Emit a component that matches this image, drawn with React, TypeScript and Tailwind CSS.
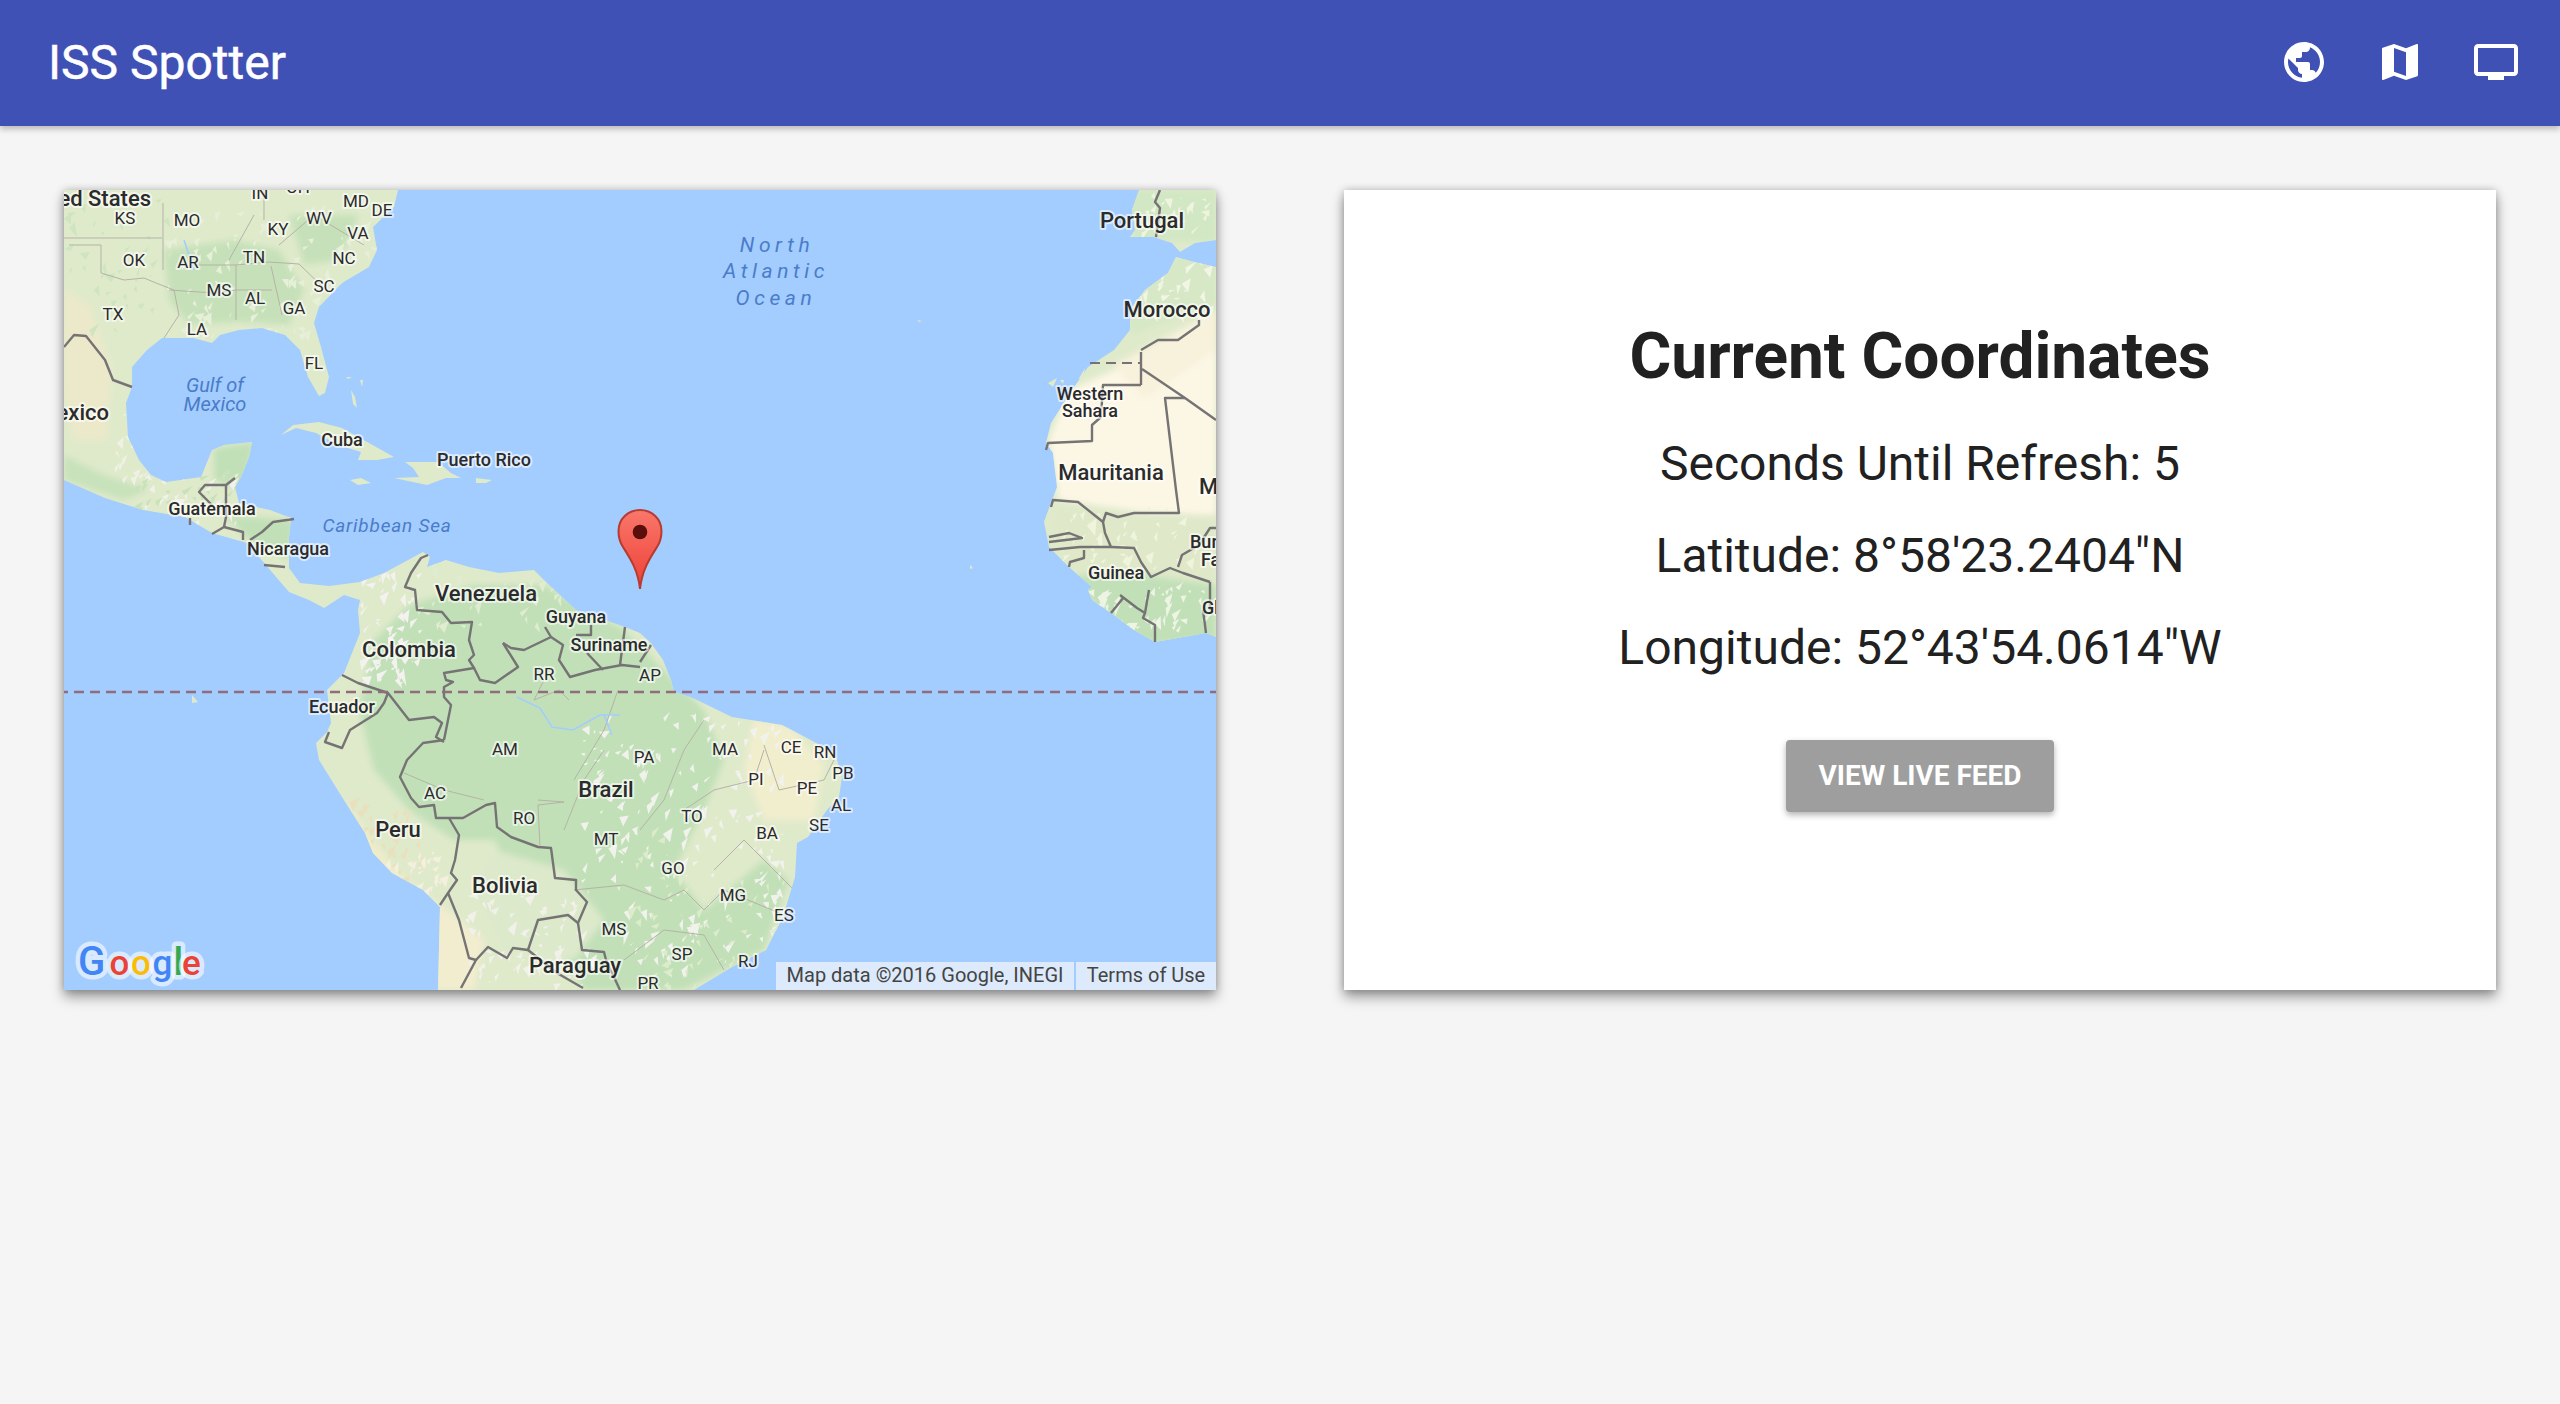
const land = [
  // north and central america
  "0,0 334,0 330,17 309,37 313,60 305,77 278,93 255,117 250,133 257,157 265,187 261,203 255,206 244,187 236,160 221,145 198,138 175,140 156,145 148,153 129,148 98,148 83,160 68,177 68,197 62,213 64,247 75,270 87,285 102,292 137,287 148,260 160,255 188,252 185,267 177,287 171,297 175,313 206,320 227,328 225,347 225,378 236,393 265,396 296,392 296,410 280,405 260,418 245,410 225,402 183,353 148,343 121,327 79,320 41,308 0,290",
  // cuba, hispaniola, jamaica, puerto rico
  "217,245 229,235 255,232 278,238 305,253 330,267 313,270 294,270 297,262 274,255 252,243 232,238",
  "341,272 374,272 387,283 397,288 382,288 363,295 330,288 355,287 349,278",
  "286,290 297,288 307,293 294,295",
  "412,288 428,290 422,293 412,293",
  "282,187 288,187 284,189",
  "296,190 299,190 298,197",
  "287,200 291,207 293,218 289,214",
  // south america
  "296,410 296,392 320,383 359,362 366,367 363,377 382,370 405,377 435,383 470,380 483,393 512,420 561,437 576,443 587,453 599,470 607,490 610,502 626,507 633,510 668,527 687,530 718,535 741,547 771,563 778,587 775,607 763,620 744,647 733,653 731,687 719,727 702,760 668,777 630,800 374,800 376,717 359,700 328,683 309,663 301,643 278,607 255,570 252,553 263,542 267,533 263,500 280,483 296,443 294,420",
  // iberia
  "1075,0 1068,20 1071,40 1066,47 1090,47 1108,53 1116,62 1131,53 1152,50 1152,0",
  // africa
  "1112,67 1130,72 1152,77 1152,447 1142,443 1091,452 1070,440 1047,423 1028,410 1024,400 1028,397 1005,377 985,357 980,332 987,313 993,297 989,263 982,253 987,233 1008,200 1024,177 1050,160 1066,140 1066,120 1081,100 1104,83",
  // canaries, azores and cape verde specks
  "984,193 993,188 989,197",
  "1015,188 1021,178 1018,192",
  "996,190 1000,190 999,194",
  "853,130 858,131 855,132",
  "906,375 909,378 906,379",
  "128,505 134,512 128,513",
];

// tone patches, clipped to land and blurred at the edges
const tones: [string, string][] = [
  ["#c6e1b9", "100,60 170,50 215,60 240,100 225,135 175,132 125,135 105,110"],
  ["#c6e1b9", "225,25 295,25 275,70 240,75"],
  ["#ece9ca", "0,100 25,115 48,180 42,250 10,250 0,200"],
  ["#c8e2bb", "0,265 40,285 85,300 60,310 0,290"],
  ["#c1e0b8", "150,258 190,252 180,300 150,290"],
  ["#c1e0b8", "160,325 230,330 225,370 185,350"],
  ["#c1e0b8", "345,415 410,395 480,395 560,440 600,480 640,520 660,570 640,620 610,680 640,720 700,670 725,690 700,760 620,800 520,800 470,720 430,650 390,650 345,620 310,580 295,520 310,450"],
  ["#dde9cb", "430,660 500,680 540,730 510,770 440,760 410,700"],
  ["#f2ecc8", "278,607 330,680 376,715 372,800 350,720 295,650"],
  ["#f1eecd", "690,530 725,535 760,575 750,630 700,630 680,580"],
  ["#f3edcf", "376,715 420,750 410,800 372,800"],
  ["#fcf7e5", "1005,200 1152,135 1152,330 1100,325 995,310 985,250"],
  ["#f8f2dc", "1050,175 1152,120 1152,160 1080,210"],
  ["#d6e8c6", "1060,80 1152,60 1152,115 1120,125 1066,145"],
  ["#d2e7c3", "1060,0 1152,0 1152,52 1070,50"],
  ["#dfe9ca", "980,318 1152,325 1152,400 1060,380 1010,385"],
  ["#c1e0b8", "1010,385 1080,385 1152,395 1152,450 1080,455 1030,415"],
];

// mottled light flecks, the small terrain shards of the map tiles
const flecks: [string, number, number, number, number, number][] = [
  ["#e6efd8", 100, 20, 230, 130, 110],
  ["#cfe5c0", 0, 10, 110, 130, 40],
  ["#f1f1ea", 80, 285, 190, 50, 46],
  ["#c9e2bb", 70, 280, 110, 40, 30],
  ["#eef1e4", 50, 200, 60, 90, 36],
  ["#f3f2ee", 295, 385, 60, 110, 70],
  ["#e0eccf", 350, 370, 150, 70, 40],
  ["#f1f2ec", 515, 525, 200, 260, 200],
  ["#dcebc9", 560, 640, 160, 160, 60],
  ["#e9e0bd", 285, 610, 70, 80, 50],
  ["#f4f0de", 320, 660, 60, 50, 30],
  ["#f1f1ea", 400, 705, 120, 90, 60],
  ["#eef4e4", 1020, 395, 120, 50, 50],
  ["#f2f5e4", 1075, 70, 70, 60, 30],
  ["#eef4de", 1075, 5, 70, 40, 26],
  ["#f0f4dc", 990, 320, 140, 60, 40],
];

const shards = flecks.flatMap(([fill, bx, by, bw, bh, count], i) => {
  let seed = 17 + i * 311;
  const rnd = () => {
    seed = (seed * 16807) % 2147483647;
    return seed / 2147483647;
  };
  return Array.from({ length: count }, () => {
    const x = bx + rnd() * bw;
    const y = by + rnd() * bh;
    const s = 3 + rnd() * 6;
    const pts = `${x},${y} ${x + s * (rnd() + 0.4)},${y - s * rnd()} ${x + s * rnd()},${y + s * (rnd() + 0.3)}`;
    return { fill, pts };
  });
});

const borders = [
  "0,157 10,145 22,146 41,170 49,190 68,197",
  "171,288 162,295 141,295 135,302 148,315",
  "162,295 162,327 160,337 148,344",
  "160,337 179,342 179,350",
  "126,328 126,335",
  "186,350 198,342 209,332 230,329",
  "200,375 221,377",
  "364,365 357,368 347,383 341,397 351,400 353,420 378,422 387,433 408,432 405,450 410,465 405,470 410,478 380,483 382,490 389,492 380,497 380,507 387,515 380,550",
  "278,485 294,493 309,498 324,503 345,530 370,527 378,533 372,547 380,552",
  "380,550 359,553 343,570 336,587 347,608 355,617 370,615 372,628 399,628 422,615 431,613 433,637 447,647 474,657 487,658 491,688 512,690 512,700 523,712 514,733 518,760 540,762 542,770 556,800",
  "385,628 395,645 391,670 387,683 393,690 384,703 376,715",
  "324,503 320,513 313,523 286,540 278,558 261,552 265,542",
  "384,703 395,730 405,768 412,770 397,798",
  "412,770 424,757 443,768 449,758 464,760 474,730 504,725 514,733",
  "464,760 493,783 519,798",
  "439,453 447,458 460,460 487,447 481,437",
  "487,447 499,455 495,470 506,487 531,480 558,475 576,477",
  "439,453 454,477 431,493 416,490 410,478",
  "527,435 527,445 512,445",
  "523,463 539,480",
  "561,437 556,475",
  "587,455 576,472",
  "1077,195 1039,195 1037,227 1028,235 1028,251 984,253 982,260",
  "1077,162 1077,195",
  "1135,130 1135,135 1114,150 1094,150 1077,160",
  "1078,179 1121,208 1152,230",
  "1121,208 1101,208 1112,300 1115,323 1070,323 1054,327 1042,323 1039,332 1014,312 989,310 987,317",
  "1039,332 1041,343 1047,357 1016,357 985,360",
  "985,347 1005,343 1018,348 985,352",
  "1047,357 1070,358 1077,372 1087,387 1106,378 1119,383 1146,392",
  "1114,377 1118,365 1135,355 1146,338 1152,338",
  "1020,360 1020,368 1006,372 1005,377",
  "1060,407 1047,423",
  "1056,405 1073,418 1081,423 1079,428 1091,435 1091,452",
  "1085,400 1081,423",
  "1139,420 1142,443",
  "1146,392 1146,420",
  "1096,0 1091,12 1096,18 1092,47",
];

const stateLines = [
  "0,48 98,48",
  "5,55 37,55 37,83",
  "37,83 60,90 80,88 92,93 110,100",
  "99,13 99,80",
  "105,100 150,103 172,100 208,100",
  "130,75 172,75 205,72 235,74",
  "172,75 172,130",
  "207,76 218,125",
  "110,100 115,125 100,148",
  "190,25 165,70",
  "235,74 262,100",
  "215,55 250,25 300,55",
  "200,0 200,30",
  "480,490 470,510 495,500 505,510",
  "340,583 380,600 420,610",
  "474,610 500,612 474,615 476,657",
  "540,560 520,590 500,640",
  "554,500 540,540 510,590",
  "510,700 560,695 600,710 620,700",
  "576,640 600,610 620,560 640,530",
  "620,620 650,600 690,590 700,560",
  "700,555 715,600 760,590 770,570",
  "650,680 680,650 730,700",
  "560,770 600,740 640,745 660,780",
  "620,700 640,720 660,700 720,725",
];

const rivers = [
  "453,507 476,518 488,537 509,540 536,525 556,525",
  "540,525 548,545",
  "120,50 130,80",
];

const stateNames: [string, number, number][] = [
  ["KS", 61, 28], ["MO", 123, 30], ["OK", 70, 70], ["AR", 124, 72], ["TN", 190, 67],
  ["KY", 214, 39], ["WV", 255, 28], ["VA", 294, 43], ["MD", 292, 11], ["DE", 318, 20],
  ["NC", 280, 68], ["SC", 260, 96], ["MS", 155, 100], ["AL", 191, 108], ["GA", 230, 118],
  ["TX", 49, 124], ["LA", 133, 139], ["FL", 250, 173], ["IN", 196, 3], ["OH", 234, -3],
  ["RR", 480, 484], ["AM", 441, 559], ["AC", 371, 603], ["RO", 460, 628], ["MT", 542, 649],
  ["MS", 550, 739], ["PA", 580, 567], ["AP", 586, 485], ["MA", 661, 559], ["CE", 727, 557],
  ["RN", 761, 562], ["PB", 779, 583], ["PI", 692, 589], ["PE", 743, 598], ["AL", 777, 615],
  ["SE", 755, 635], ["TO", 628, 626], ["BA", 703, 643], ["GO", 609, 678], ["MG", 669, 705],
  ["ES", 720, 725], ["SP", 618, 764], ["RJ", 684, 771], ["PR", 584, 793],
];

const countryNames: [string, number, number, number][] = [
  ["Cuba", 278, 250, 18], ["Puerto Rico", 420, 270, 18], ["Guatemala", 148, 319, 18],
  ["Nicaragua", 224, 359, 18], ["Guyana", 512, 427, 18], ["Suriname", 545, 455, 18],
  ["Ecuador", 278, 517, 18], ["Western", 1026, 204, 18], ["Sahara", 1026, 221, 18],
  ["Guinea", 1052, 383, 18], ["Venezuela", 422, 403, 22], ["Colombia", 345, 459, 22],
  ["Peru", 334, 639, 22], ["Brazil", 542, 599, 22], ["Bolivia", 441, 695, 22],
  ["Paraguay", 511, 775, 22], ["Portugal", 1078, 30, 22], ["Morocco", 1103, 119, 22],
  ["Mauritania", 1047, 282, 22],
];

// labels that run off the edge of the map
const edgeNames: [string, number, number, number, "start" | "end"][] = [
  ["United States", 87, 8, 22, "end"],
  ["Mexico", 45, 222, 22, "end"],
  ["Mali", 1135, 296, 22, "start"],
  ["Burkina", 1126, 352, 18, "start"],
  ["Faso", 1137, 370, 18, "start"],
  ["Ghana", 1138, 418, 18, "start"],
];

const waterNames: [string, number, number, number, number][] = [
  ["Gulf of", 151, 195, 20, 0],
  ["Mexico", 151, 214, 20, 0],
  ["Caribbean Sea", 323, 335, 19, 0.8],
  ["North", 713, 54, 21, 4.6],
  ["Atlantic", 712, 80, 21, 4.6],
  ["Ocean", 712, 107, 21, 4.6],
];

// x, size per letter: the o's are wider for their height than any installed font
const googleLetters: [string, number, number, string][] = [
  ["G", 14, 40, "#4285f4"],
  ["o", 45.5, 35, "#ea4335"],
  ["o", 67, 35, "#fbbc05"],
  ["g", 88.5, 35, "#4285f4"],
  ["l", 109.5, 38, "#34a853"],
  ["e", 118, 35, "#ea4335"],
];

const MapView = () => (
  <div className="relative h-[800px] overflow-hidden bg-[#a3ccff] shadow-[0_7px_12px_rgba(0,0,0,0.38),0_0_8px_rgba(0,0,0,0.2)]">
    <svg viewBox="0 0 1152 800" className="block h-full w-full">
      <defs>
        <clipPath id="land-clip">
          {land.map((pts) => (
            <polygon key={pts} points={pts} />
          ))}
        </clipPath>
        <filter id="soft">
          <feGaussianBlur stdDeviation="3" />
        </filter>
        <linearGradient id="pin-fill" x1="0" y1="0" x2="0" y2="1">
          <stop offset="0" stopColor="#f9776c" />
          <stop offset="1" stopColor="#ee4034" />
        </linearGradient>
      </defs>

      {land.map((pts) => (
        <polygon key={pts} points={pts} fill="#dfeacb" />
      ))}

      <g clipPath="url(#land-clip)">
        <g filter="url(#soft)">
          {tones.map(([fill, pts]) => (
            <polygon key={pts} points={pts} fill={fill} />
          ))}
        </g>
        {shards.map((s, i) => (
          <polygon key={i} points={s.pts} fill={s.fill} />
        ))}
        {stateLines.map((pts) => (
          <polyline key={pts} points={pts} fill="none" stroke="#b4b3a6" strokeWidth="1" />
        ))}
        {rivers.map((pts) => (
          <polyline key={pts} points={pts} fill="none" stroke="#a3ccff" strokeWidth="1.6" />
        ))}
      </g>

      {/* Borders */}
      {borders.map((pts) => (
        <polyline key={pts} points={pts} fill="none" stroke="#757373" strokeWidth="2.4" strokeLinejoin="round" />
      ))}
      <line x1="1026" y1="173" x2="1077" y2="173" stroke="#757373" strokeWidth="2.2" strokeDasharray="10 6" />

      {/* Equator */}
      <line x1="0" y1="502" x2="1152" y2="502" stroke="#916c7c" strokeWidth="2.4" strokeDasharray="10 6" strokeDashoffset="6" />

      {/* Labels */}
      <g className="[font-family:Roboto,sans-serif]" fill="#2b2b2b" stroke="#ffffff" strokeOpacity="0.6" strokeWidth="4" strokeLinejoin="round" paintOrder="stroke">
        {stateNames.map(([t, x, y]) => (
          <text key={t + x} x={x} y={y + 6} fontSize="17" textAnchor="middle">{t}</text>
        ))}
        {countryNames.map(([t, x, y, s]) => (
          <text key={t} x={x} y={y + s * 0.36} fontSize={s} fontWeight="500" textAnchor="middle">{t}</text>
        ))}
        {edgeNames.map(([t, x, y, s, a]) => (
          <text key={t} x={x} y={y + s * 0.36} fontSize={s} fontWeight="500" textAnchor={a}>{t}</text>
        ))}
      </g>
      <g className="[font-family:Roboto,sans-serif]" fill="#4a7cc9" fontStyle="italic" fontWeight="400">
        {waterNames.map(([t, x, y, s, ls]) => (
          <text key={t + y} x={x} y={y + s * 0.36} fontSize={s} letterSpacing={ls} textAnchor="middle">{t}</text>
        ))}
      </g>

      {/* Marker */}
      <path
        d="M576 399 C574 380 566 368 559 357 C555 351 554.5 346 554.5 341 C554.5 329 564 320 576 320 C588 320 597.5 329 597.5 341 C597.5 346 597 351 593 357 C586 368 578 380 576 399 Z"
        fill="url(#pin-fill)"
        stroke="#b93a2e"
        strokeWidth="2"
      />
      <circle cx="576" cy="342" r="7.3" fill="#5a0f0b" />

      {/* Google logo */}
      <g className="[font-family:Roboto,sans-serif]" fontWeight="500" stroke="#ffffff" strokeOpacity="0.6" strokeWidth="9" strokeLinejoin="round" paintOrder="stroke">
        {googleLetters.map(([t, x, s, c]) => (
          <text key={x} x={x} y="785" fontSize={s} fill={c}>{t}</text>
        ))}
      </g>
    </svg>

    <div className="absolute bottom-0 right-0 flex h-[28px] gap-[2px] text-[20px] leading-[26px] text-[#444] [font-family:Roboto,sans-serif]">
      <span className="w-[298px] bg-[#dceafc] text-center">Map data ©2016 Google, INEGI</span>
      <span className="w-[140px] bg-[#dceafc] text-center">Terms of Use</span>
    </div>
  </div>
);

const HeaderIcon = ({ d }: { d: string }) => (
  <button className="flex size-[48px] items-center justify-center">
    <svg viewBox="0 0 24 24" className="size-[48px]" fill="#ffffff">
      <path d={d} />
    </svg>
  </button>
);

const App = () => {
  return (
    <div className="min-h-screen bg-[#f5f5f5] [font-family:Roboto,sans-serif]">
      {/* Toolbar */}
      <header className="relative z-10 flex h-[126px] items-center justify-between bg-[#3f51b5] pl-[48px] pr-[40px] shadow-[0_3px_6px_rgba(0,0,0,0.25)]">
        <h1 className="text-[48px] font-normal text-white [-webkit-text-stroke:0.5px_white]">ISS Spotter</h1>
        <div className="-mt-[2px] flex gap-[48px]">
          <HeaderIcon d="M12 2C6.48 2 2 6.48 2 12s4.48 10 10 10 10-4.48 10-10S17.52 2 12 2zm-1 17.93c-3.95-.49-7-3.85-7-7.93 0-.62.08-1.21.21-1.79L9 15v1c0 1.1.9 2 2 2v1.93zm6.9-2.54c-.26-.81-1-1.39-1.9-1.39h-1v-3c0-.55-.45-1-1-1H8v-2h2c.55 0 1-.45 1-1V7h2c1.1 0 2-.9 2-2v-.41c2.93 1.19 5 4.06 5 7.41 0 2.08-.8 3.97-2.1 5.39z" />
          <HeaderIcon d="M20.5 3l-.16.03L15 5.1 9 3 3.36 4.9c-.21.07-.36.25-.36.48V20.5c0 .28.22.5.5.5l.16-.03L9 18.9l6 2.1 5.64-1.9c.21-.07.36-.25.36-.48V3.5c0-.28-.22-.5-.5-.5zM15 19l-6-2.11V5l6 2.11V19z" />
          <HeaderIcon d="M21 3H3c-1.1 0-2 .9-2 2v12c0 1.1.9 2 2 2h5v2h8v-2h5c1.1 0 1.99-.9 1.99-2L23 5c0-1.1-.9-2-2-2zm0 14H3V5h18v12z" />
        </div>
      </header>

      {/* Content */}
      <main className="grid grid-cols-2 gap-[128px] px-[64px] pt-[64px]">
        <MapView />

        <section className="flex h-[800px] flex-col items-center bg-white pt-[129px] text-[#212121] shadow-[0_7px_12px_rgba(0,0,0,0.38),0_0_8px_rgba(0,0,0,0.2)]">
          <h2 className="text-[64px] font-bold leading-[76px]">Current Coordinates</h2>
          <p className="mt-[41px] text-[48px] leading-[56px]">Seconds Until Refresh: 5</p>
          <p className="mt-[36px] text-[48px] leading-[56px]">Latitude: 8°58'23.2404"N</p>
          <p className="mt-[36px] text-[48px] leading-[56px]">Longitude: 52°43'54.0614"W</p>
          <button className="mt-[64px] h-[72px] w-[268px] rounded-[4px] bg-[#9e9e9e] text-[28px] font-bold uppercase text-white shadow-[0_3px_6px_rgba(0,0,0,0.3)]">
            View Live Feed
          </button>
        </section>
      </main>
    </div>
  );
};

export default App;
